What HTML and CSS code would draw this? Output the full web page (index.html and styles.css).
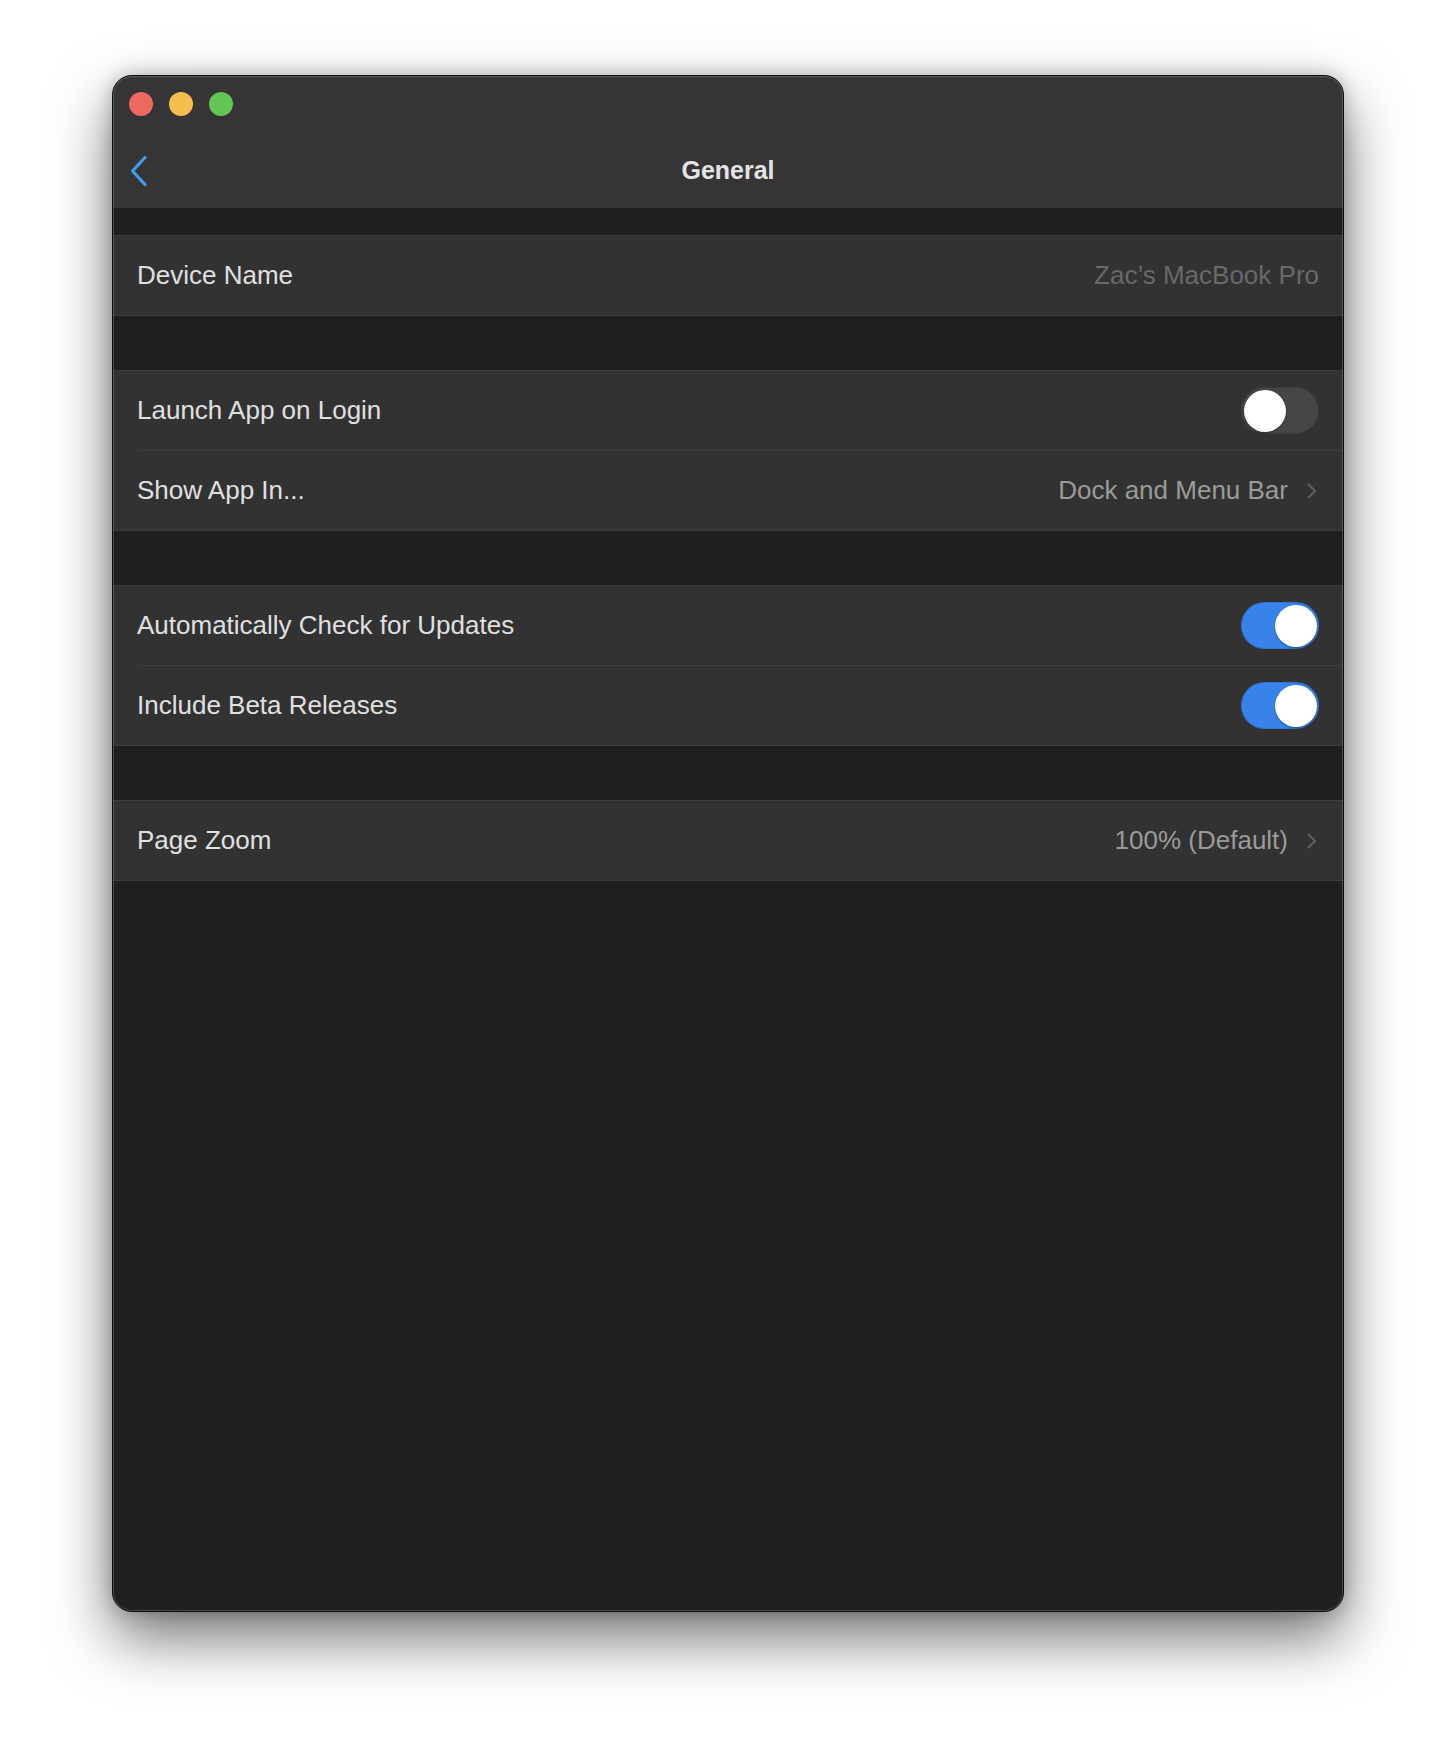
FILE: index.html
```html
<!DOCTYPE html>
<html lang="en">
<head>
<meta charset="utf-8">
<title>General</title>
<link rel="stylesheet" href="styles.css">
</head>
<body>
<div class="page">
  <div class="window">
    <header class="titlebar">
      <div class="traffic">
        <span class="light red"></span>
        <span class="light yellow"></span>
        <span class="light green"></span>
      </div>
      <div class="navbar">
        <span class="back">
          <svg width="24" height="34" viewBox="0 0 24 34"><path d="M17 3.5 L4.5 17 L17 30.5" fill="none" stroke="#3d9ef0" stroke-width="3.2" stroke-linecap="round" stroke-linejoin="round"/></svg>
        </span>
        <h1 class="title">General</h1>
      </div>
    </header>
    <main class="content">
      <section class="group">
        <div class="row"><div class="row-inner">
          <span class="label">Device Name</span>
          <span class="placeholder">Zac’s MacBook Pro</span>
        </div></div>
      </section>
      <section class="group">
        <div class="row"><div class="row-inner">
          <span class="label">Launch App on Login</span>
          <span class="toggle"><span class="knob"></span></span>
        </div></div>
        <div class="row"><div class="row-inner">
          <span class="label">Show App In...</span>
          <span class="value">Dock and Menu Bar
            <svg class="chev" width="12" height="18" viewBox="0 0 12 18"><path d="M3.5 2.5 L10 9 L3.5 15.5" fill="none" stroke="#5f5f5f" stroke-width="2.2" stroke-linecap="round" stroke-linejoin="round"/></svg>
          </span>
        </div></div>
      </section>
      <section class="group">
        <div class="row"><div class="row-inner">
          <span class="label">Automatically Check for Updates</span>
          <span class="toggle on"><span class="knob"></span></span>
        </div></div>
        <div class="row"><div class="row-inner">
          <span class="label">Include Beta Releases</span>
          <span class="toggle on"><span class="knob"></span></span>
        </div></div>
      </section>
      <section class="group">
        <div class="row"><div class="row-inner">
          <span class="label">Page Zoom</span>
          <span class="value">100% (Default)
            <svg class="chev" width="12" height="18" viewBox="0 0 12 18"><path d="M3.5 2.5 L10 9 L3.5 15.5" fill="none" stroke="#5f5f5f" stroke-width="2.2" stroke-linecap="round" stroke-linejoin="round"/></svg>
          </span>
        </div></div>
      </section>
    </main>
    <div class="frame"></div>
  </div>
</div>
</body>
</html>
```
FILE: styles.css
```css
* { box-sizing: border-box; }
html, body { margin: 0; padding: 0; }
body {
  background: #ffffff;
  font-family: "Liberation Sans", Arial, sans-serif;
  width: 1456px;
  height: 1760px;
  overflow: hidden;
}
.page {
  display: flex;
  justify-content: center;
  padding-top: 75px;
}
.window {
  position: relative;
  width: 1232px;
  height: 1537px;
  border: 1px solid #0c0c0c;
  border-radius: 20px;
  background: #1f1f1f;
  overflow: hidden;
  display: flex;
  flex-direction: column;
  box-shadow: 0 26px 60px rgba(0,0,0,0.55), 0 0 18px rgba(0,0,0,0.22);
}
.frame {
  position: absolute;
  inset: 0;
  border: 1px solid rgba(255,255,255,0.2);
  border-radius: 19px;
  pointer-events: none;
}
.titlebar {
  height: 132px;
  background: #363435;
  display: flex;
  flex-direction: column;
  flex-shrink: 0;
}
.traffic {
  display: flex;
  gap: 16px;
  padding: 16px 0 0 16px;
}
.light {
  width: 24px;
  height: 24px;
  border-radius: 50%;
  display: block;
}
.red { background: #ee6a5f; }
.yellow { background: #f5be4f; }
.green { background: #61c554; }
.navbar {
  position: relative;
  display: flex;
  align-items: center;
  justify-content: center;
  height: 76px;
  margin-top: 16px;
}
.back {
  position: absolute;
  left: 15px;
  top: 22px;
  display: block;
  width: 24px;
  height: 34px;
}
.back svg { display: block; }
.title {
  margin: 0;
  font-size: 25px;
  font-weight: bold;
  color: #e4e4e4;
  letter-spacing: 0;
}
.content {
  flex: 1;
  display: flex;
  flex-direction: column;
  gap: 54px;
  padding-top: 27px;
}
.group {
  background: #323232;
  border-top: 1px solid #3c3c3c;
  border-bottom: 1px solid #3c3c3c;
}
.row {
  padding-left: 24px;
}
.row-inner {
  height: 79px;
  display: flex;
  align-items: center;
  justify-content: space-between;
  padding-right: 24px;
}
.row + .row .row-inner {
  height: 80px;
  border-top: 1px solid #3c3c3c;
}
.label {
  font-size: 26px;
  color: #e0e0e0;
}
.placeholder {
  font-size: 26px;
  color: #696969;
}
.value {
  font-size: 26px;
  color: #9b9b9b;
  display: flex;
  align-items: center;
  gap: 17px;
}
.chev { display: block; margin-right: 2px; }
.toggle {
  position: relative;
  width: 78px;
  height: 47px;
  border-radius: 24px;
  background: #464646;
  box-shadow: inset 0 0 0 1px rgba(0,0,0,0.12);
  display: block;
}
.toggle .knob {
  position: absolute;
  top: 2.5px;
  left: 2.5px;
  width: 42px;
  height: 42px;
  border-radius: 50%;
  background: #ffffff;
  box-shadow: 0 1px 2px rgba(0,0,0,0.35);
}
.toggle.on {
  background: #3883ea;
}
.toggle.on .knob {
  left: auto;
  right: 2.5px;
}
```
